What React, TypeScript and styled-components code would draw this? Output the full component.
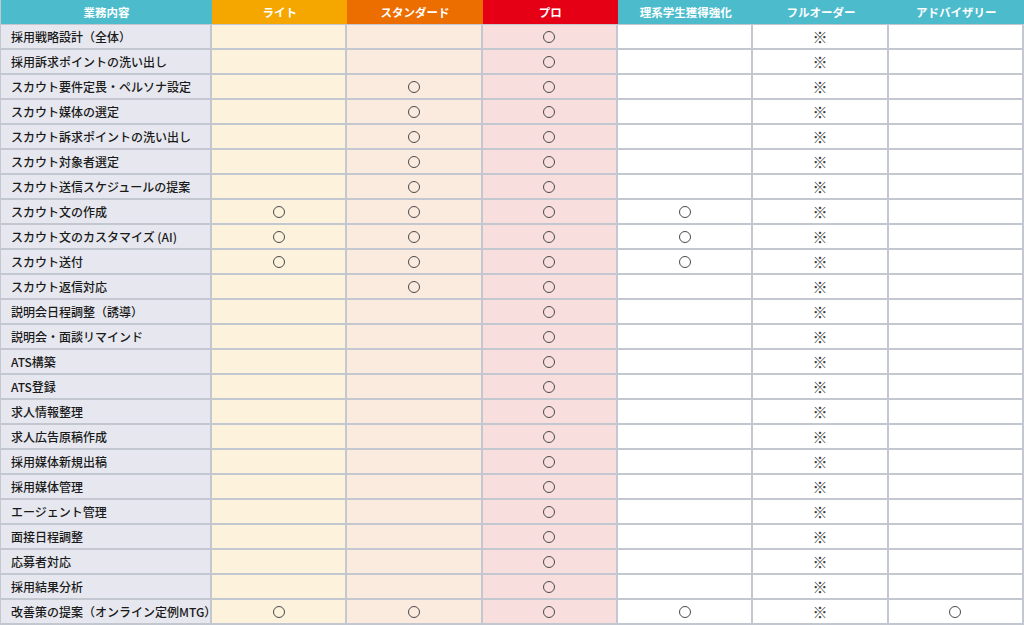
import styled, { createGlobalStyle } from "styled-components";

const GlobalStyle = createGlobalStyle`
  html, body {
    margin: 0;
    padding: 0;
    background: #ffffff;
  }
  body {
    font-family: "Noto Sans CJK JP", "Noto Sans", sans-serif;
  }
`;

type Tone = "task" | "light" | "standard" | "pro" | "plain";

const HEAD_BG: Record<Tone, string> = {
  task: "#4cbccd",
  light: "#f5a700",
  standard: "#ec6d00",
  pro: "#e50015",
  plain: "#4cbccd",
};

const CELL_BG: Record<Tone, string> = {
  task: "#e7e8ef",
  light: "#fdf3dd",
  standard: "#fbeade",
  pro: "#f9dede",
  plain: "#ffffff",
};

const COLUMNS: { label: string; tone: Tone }[] = [
  { label: "業務内容", tone: "task" },
  { label: "ライト", tone: "light" },
  { label: "スタンダード", tone: "standard" },
  { label: "プロ", tone: "pro" },
  { label: "理系学生獲得強化", tone: "plain" },
  { label: "フルオーダー", tone: "plain" },
  { label: "アドバイザリー", tone: "plain" },
];

// marks per row: light, standard, pro, rikei, full order, advisory
const ROWS: [string, string][] = [
  ["採用戦略設計（全体）", "--o-x-"],
  ["採用訴求ポイントの洗い出し", "--o-x-"],
  ["スカウト要件定畏・ペルソナ設定", "-oo-x-"],
  ["スカウト媒体の選定", "-oo-x-"],
  ["スカウト訴求ポイントの洗い出し", "-oo-x-"],
  ["スカウト対象者選定", "-oo-x-"],
  ["スカウト送信スケジュールの提案", "-oo-x-"],
  ["スカウト文の作成", "oooox-"],
  ["スカウト文のカスタマイズ (AI)", "oooox-"],
  ["スカウト送付", "oooox-"],
  ["スカウト返信対応", "-oo-x-"],
  ["説明会日程調整（誘導）", "--o-x-"],
  ["説明会・面談リマインド", "--o-x-"],
  ["ATS構築", "--o-x-"],
  ["ATS登録", "--o-x-"],
  ["求人情報整理", "--o-x-"],
  ["求人広告原稿作成", "--o-x-"],
  ["採用媒体新規出稿", "--o-x-"],
  ["採用媒体管理", "--o-x-"],
  ["エージェント管理", "--o-x-"],
  ["面接日程調整", "--o-x-"],
  ["応募者対応", "--o-x-"],
  ["採用結果分析", "--o-x-"],
  ["改善策の提案（オンライン定例MTG）", "ooooxo"],
];

const Table = styled.div`
  width: 1024px;
  display: grid;
  grid-template-columns: 211px repeat(6, 1fr);
  grid-auto-rows: 25px;
  border-left: 1px solid #c3c7cf;
  box-sizing: border-box;
`;

const HeadCell = styled.div<{ $tone: Tone }>`
  display: flex;
  align-items: center;
  justify-content: center;
  background: ${(p) => HEAD_BG[p.$tone]};
  color: #ffffff;
  font-size: 11.5px;
  font-weight: 700;
  border-bottom: 1px solid #c3c7cf;
`;

const TaskCell = styled.div`
  display: flex;
  align-items: center;
  padding-left: 10px;
  background: ${CELL_BG.task};
  color: #1a1a1a;
  font-size: 12px;
  font-weight: 500;
  white-space: nowrap;
  border-right: 2px solid #c3c7cf;
  border-bottom: 2px solid #c3c7cf;
`;

const MarkCell = styled.div<{ $tone: Tone }>`
  display: flex;
  align-items: center;
  justify-content: center;
  background: ${(p) => CELL_BG[p.$tone]};
  border-right: 2px solid #c3c7cf;
  border-bottom: 2px solid #c3c7cf;
`;

const Circle = styled.span`
  width: 10px;
  height: 10px;
  border: 1px solid #4a4a4a;
  border-radius: 50%;
`;

const Note = styled.span`
  font-size: 15px;
  font-weight: 700;
  line-height: 1;
  color: #3c3c3c;
`;

const Mark = ({ kind }: { kind: string }) => {
  if (kind === "o") return <Circle />;
  if (kind === "x") return <Note>※</Note>;
  return null;
};

const App = () => {
  return (
    <>
      <GlobalStyle />
      <Table>
        {COLUMNS.map((c) => (
          <HeadCell key={c.label} $tone={c.tone}>
            {c.label}
          </HeadCell>
        ))}
        {ROWS.map(([task, marks]) => [
          <TaskCell key={task}>{task}</TaskCell>,
          ...marks.split("").map((m, i) => (
            <MarkCell key={`${task}-${i}`} $tone={COLUMNS[i + 1].tone}>
              <Mark kind={m} />
            </MarkCell>
          )),
        ])}
      </Table>
    </>
  );
};

export default App;
